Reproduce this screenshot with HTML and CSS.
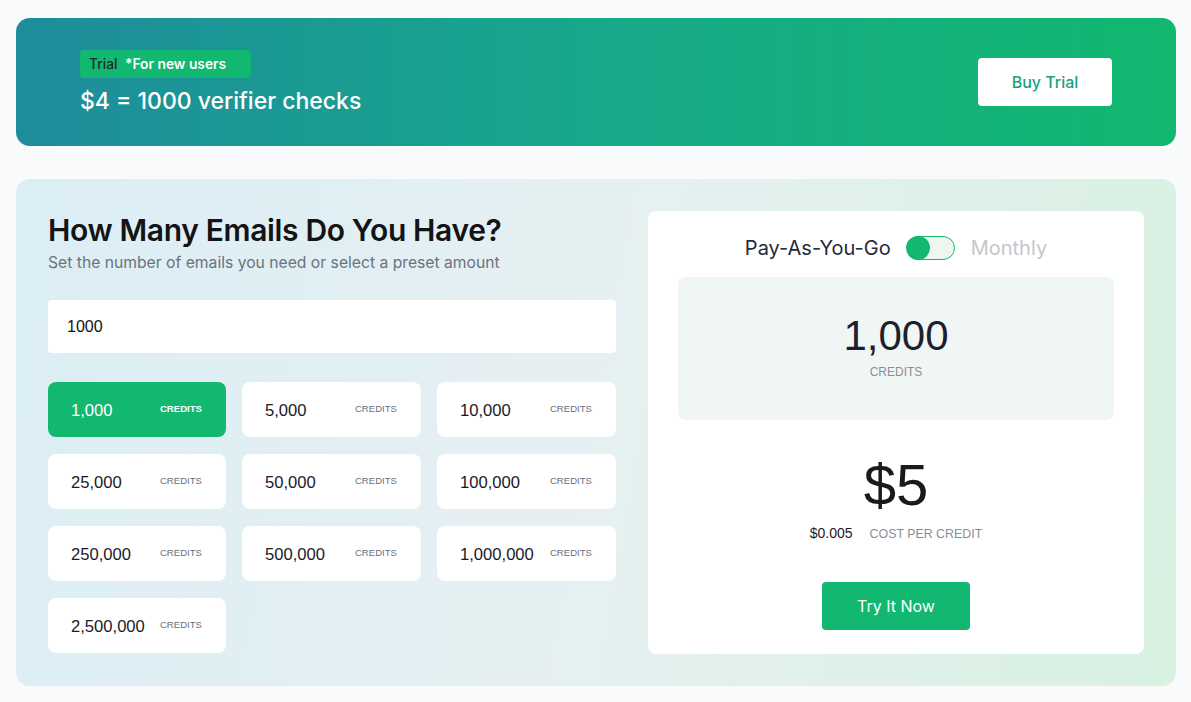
FILE: index.html
```html
<!DOCTYPE html>
<html lang="en">
<head>
    <meta charset="UTF-8">
    <meta name="viewport" content="width=device-width, initial-scale=1.0">
    <title>Pricing</title>
    <link rel="stylesheet" href="styles.css">
</head>
<body>
    <div class="page">
        <div class="trial-banner">
            <div class="trial-info">
                <div class="trial-badge"><span class="trial-label">Trial</span> *For new users</div>
                <h2>$4 = 1000 verifier checks</h2>
            </div>
            <button class="buy-trial">Buy Trial</button>
        </div>

        <div class="pricing">
            <div class="picker">
                <h1>How Many Emails Do You Have?</h1>
                <p class="subtitle">Set the number of emails you need or select a preset amount</p>
                <input class="amount-input" type="text" value="1000">

                <div class="presets">
                    <div class="preset active"><span class="num">1,000</span><span class="unit">CREDITS</span></div>
                    <div class="preset"><span class="num">5,000</span><span class="unit">CREDITS</span></div>
                    <div class="preset"><span class="num">10,000</span><span class="unit">CREDITS</span></div>
                    <div class="preset"><span class="num">25,000</span><span class="unit">CREDITS</span></div>
                    <div class="preset"><span class="num">50,000</span><span class="unit">CREDITS</span></div>
                    <div class="preset"><span class="num">100,000</span><span class="unit">CREDITS</span></div>
                    <div class="preset"><span class="num">250,000</span><span class="unit">CREDITS</span></div>
                    <div class="preset"><span class="num">500,000</span><span class="unit">CREDITS</span></div>
                    <div class="preset"><span class="num">1,000,000</span><span class="unit">CREDITS</span></div>
                    <div class="preset"><span class="num">2,500,000</span><span class="unit">CREDITS</span></div>
                </div>
            </div>

            <div class="summary">
                <div class="plan-toggle">
                    <span class="plan on">Pay-As-You-Go</span>
                    <span class="switch"><span class="knob"></span></span>
                    <span class="plan off">Monthly</span>
                </div>

                <div class="credits-box">
                    <div class="credits-count">1,000</div>
                    <div class="credits-label">CREDITS</div>
                </div>

                <div class="price">$5</div>
                <div class="per-credit">
                    <span class="rate">$0.005</span>
                    <span class="rate-label">COST PER CREDIT</span>
                </div>

                <button class="try-now">Try It Now</button>
            </div>
        </div>
    </div>
</body>
</html>
```

FILE: styles.css
```css
body {
    margin: 0;
    background-color: #f8fafc;
    font-family: 'Inter', 'Noto Sans', sans-serif;
    color: #1a1a1a;
}

.page {
    padding: 18px 15px 16px 16px;
    display: flex;
    flex-direction: column;
    gap: 33px;
}

.trial-banner {
    height: 128px;
    border-radius: 14px;
    background: linear-gradient(90deg, #1e8c9c 0%, #17a88a 50%, #11b86f 100%);
    display: flex;
    align-items: center;
    justify-content: space-between;
    padding: 0 64px 0 64px;
    box-sizing: border-box;
}

.trial-info {
    display: flex;
    flex-direction: column;
    gap: 9px;
}

.trial-badge {
    align-self: flex-start;
    width: 171px;
    box-sizing: border-box;
    height: 28px;
    line-height: 28px;
    padding: 0 9px;
    background-color: #12b86f;
    border-radius: 4px;
    color: #fff;
    font-size: 13.8px;
    font-weight: 600;
}

.trial-label {
    color: #1f2a2a;
    font-weight: 500;
    margin-right: 4px;
}

.trial-info h2 {
    margin: 0;
    color: #fff;
    font-size: 23px;
    font-weight: 500;
    line-height: 28px;
}

.buy-trial {
    width: 134px;
    height: 48px;
    border: none;
    border-radius: 4px;
    background-color: #fff;
    color: #17a27c;
    font-family: inherit;
    font-size: 16px;
    font-weight: 500;
}

.pricing {
    height: 507px;
    box-sizing: border-box;
    border-radius: 14px;
    background: linear-gradient(100deg, #dbeef5 0%, #e6f0f2 50%, #d8f1e1 100%);
    padding: 32px;
    display: flex;
    gap: 32px;
}

.picker {
    width: 568px;
    display: flex;
    flex-direction: column;
}

.picker h1 {
    margin: 1px 0 0 0;
    font-size: 30px;
    font-weight: 600;
    line-height: 36px;
    letter-spacing: -0.35px;
    color: #141414;
}

.subtitle {
    margin: 5px 0 0 0;
    font-size: 15.7px;
    color: #6b7280;
    line-height: 20px;
}

.amount-input {
    margin-top: 27px;
    height: 53px;
    box-sizing: border-box;
    border: none;
    border-radius: 4px;
    padding: 0 19px;
    background-color: #fff;
    font-family: 'Liberation Sans', Arial, sans-serif;
    font-size: 16px;
    color: #111;
    outline: none;
}

.presets {
    margin-top: 29px;
    display: grid;
    grid-template-columns: 178px 179px 179px;
    column-gap: 16px;
    row-gap: 17px;
    grid-auto-rows: 55px;
}

.preset {
    background-color: #fff;
    border-radius: 8px;
    display: flex;
    align-items: center;
    justify-content: space-between;
    padding: 0 24px 0 23px;
    font-family: 'Liberation Sans', Arial, sans-serif;
    color: #1a1a2a;
}

.preset .num {
    font-size: 16.6px;
    margin-top: 2px;
}

.preset .unit {
    font-size: 9.6px;
    color: #6b6f80;
    margin-top: -3px;
}

.preset.active {
    background-color: #12b86f;
    color: #fff;
}

.preset.active .unit {
    color: #fff;
    font-weight: bold;
}

.summary {
    width: 496px;
    height: 443px;
    background-color: #fff;
    border-radius: 8px;
    padding: 0 30px;
    box-sizing: border-box;
    display: flex;
    flex-direction: column;
    align-items: center;
}

.plan-toggle {
    margin-top: 25px;
    height: 24px;
    display: flex;
    align-items: center;
    gap: 16px;
    font-size: 20px;
}

.plan.on {
    color: #272a3a;
}

.plan.off {
    color: #c6c6cc;
}

.switch {
    width: 48px;
    height: 24px;
    box-sizing: border-box;
    border: 1.5px solid #12b86f;
    border-radius: 12px;
    background-color: #eef6f2;
    display: flex;
    align-items: center;
}

.knob {
    width: 24px;
    height: 24px;
    margin-left: -1.5px;
    border-radius: 50%;
    background-color: #12b86f;
}

.credits-box {
    margin-top: 17px;
    width: 436px;
    height: 143px;
    box-sizing: border-box;
    border-radius: 8px;
    background-color: #f0f6f3;
    display: flex;
    flex-direction: column;
    align-items: center;
    padding-top: 35px;
}

.credits-count {
    font-family: 'Liberation Sans', Arial, sans-serif;
    font-size: 42px;
    line-height: 48px;
    color: #1c1f2e;
}

.credits-label {
    margin-top: 5px;
    font-family: 'Liberation Sans', Arial, sans-serif;
    font-size: 12px;
    color: #8a8d99;
}

.price {
    margin-top: 32px;
    font-family: 'Liberation Sans', Arial, sans-serif;
    font-size: 58px;
    line-height: 66px;
    color: #1a1a1a;
}

.per-credit {
    margin-top: 7px;
    display: flex;
    align-items: baseline;
    gap: 17px;
    font-family: 'Liberation Sans', Arial, sans-serif;
}

.rate {
    font-size: 14px;
    color: #221a1a;
}

.rate-label {
    font-size: 12.4px;
    color: #8a8d99;
}

.try-now {
    margin-top: 41px;
    width: 148px;
    height: 48px;
    border: none;
    border-radius: 4px;
    background-color: #12b86f;
    color: #fff;
    font-family: inherit;
    font-size: 16px;
}
```
